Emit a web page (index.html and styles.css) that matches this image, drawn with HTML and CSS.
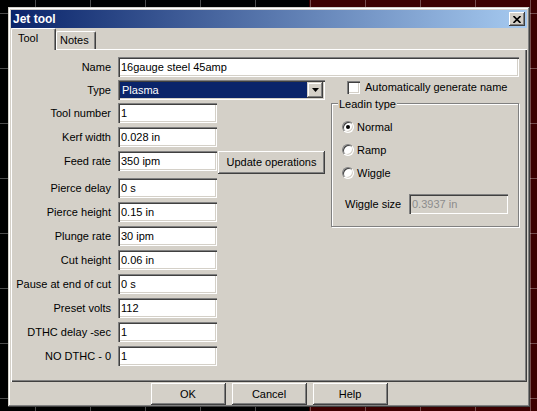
FILE: index.html
```html
<!DOCTYPE html>
<html>
<head>
<meta charset="utf-8">
<link rel="stylesheet" href="styles.css">
</head>
<body>
<div class="dialog">
  <div class="titlebar">
    <span class="title">Jet tool</span>
    <span class="close"><svg width="8" height="7" viewBox="0 0 8 7"><path d="M0.5 0 L7.5 7 M7.5 0 L0.5 7" stroke="#000" stroke-width="1.6" fill="none"/></svg></span>
  </div>
  <div class="tabs">
    <div class="tab active">Tool</div>
    <div class="tab">Notes</div>
  </div>
  <div class="panel">
    <div class="row"><span class="lbl">Name</span><div class="field wide">16gauge steel 45amp</div></div>
    <div class="row gap3">
      <span class="lbl">Type</span>
      <div class="combo"><span class="combo-text">Plasma</span><span class="combo-btn"><svg width="7" height="4" viewBox="0 0 7 4"><polygon points="0,0 7,0 3.5,4" fill="#000"/></svg></span></div>
      <div class="check"><span class="cb"></span>Automatically generate name</div>
    </div>
    <div class="body">
      <div class="col">
        <div class="row"><span class="lbl">Tool number</span><div class="field">1</div></div>
        <div class="row"><span class="lbl">Kerf width</span><div class="field">0.028 in</div></div>
        <div class="row tall"><span class="lbl">Feed rate</span><div class="field">350 ipm</div><div class="btn update">Update operations</div></div>
        <div class="row"><span class="lbl">Pierce delay</span><div class="field">0 s</div></div>
        <div class="row"><span class="lbl">Pierce height</span><div class="field">0.15 in</div></div>
        <div class="row"><span class="lbl">Plunge rate</span><div class="field">30 ipm</div></div>
        <div class="row"><span class="lbl">Cut height</span><div class="field">0.06 in</div></div>
        <div class="row"><span class="lbl">Pause at end of cut</span><div class="field">0 s</div></div>
        <div class="row"><span class="lbl">Preset volts</span><div class="field">112</div></div>
        <div class="row"><span class="lbl">DTHC delay -sec</span><div class="field">1</div></div>
        <div class="row"><span class="lbl">NO DTHC - 0</span><div class="field">1</div></div>
      </div>
      <div class="group">
        <span class="legend">Leadin type</span>
        <div class="radios">
          <div class="radio"><span class="rb on"></span>Normal</div>
          <div class="radio"><span class="rb"></span>Ramp</div>
          <div class="radio"><span class="rb"></span>Wiggle</div>
        </div>
        <div class="wiggle"><span class="wlbl">Wiggle size</span><div class="field disabled">0.3937 in</div></div>
      </div>
    </div>
  </div>
  <div class="actions">
    <div class="btn act">OK</div>
    <div class="btn act">Cancel</div>
    <div class="btn act">Help</div>
  </div>
</div>
</body>
</html>
```
FILE: styles.css
```css
html {
  background-color: #000;
  background-image:
    repeating-linear-gradient(to right, transparent 0, transparent 35px, rgba(255,255,255,0.3) 35px, rgba(255,255,255,0.3) 36px, transparent 36px, transparent 55px),
    repeating-linear-gradient(to bottom, transparent 0, transparent 13px, rgba(255,255,255,0.3) 13px, rgba(255,255,255,0.3) 14px, transparent 14px, transparent 55px),
    linear-gradient(to right, #000 0, #000 309px, #3c0000 309px, #3c0000 100%);
  height: 100%;
}
body {
  margin: 0;
  padding: 7px 0 0 8px;
  width: 537px;
  height: 411px;
  box-sizing: border-box;
  overflow: hidden;
}
.dialog {
  width: 522px;
  box-sizing: border-box;
  padding: 3px 3px 2px 3px;
  background: #d4d0c8;
  box-shadow: inset -1px -1px #404040, inset 1px 1px #d4d0c8, inset -2px -2px #808080, inset 2px 2px #fff;
  display: flex;
  flex-direction: column;
  font-family: "Liberation Sans", Arial, sans-serif;
  font-size: 11px;
  color: #000;
}
.titlebar {
  height: 18px;
  display: flex;
  align-items: center;
  justify-content: space-between;
  background: linear-gradient(to right, #0a246a, #a6caf0);
  padding: 0 2px;
}
.title {
  color: #fff;
  font-weight: bold;
  font-size: 12px;
}
.close {
  width: 16px;
  height: 14px;
  box-sizing: border-box;
  background: #d4d0c8;
  box-shadow: inset -1px -1px #404040, inset 1px 1px #fff, inset -2px -2px #808080;
  display: flex;
  align-items: center;
  justify-content: center;
}
.tabs {
  display: flex;
  align-items: flex-end;
  height: 21px;
}
.tab {
  height: 18px;
  box-sizing: border-box;
  line-height: 17px;
  background: #d4d0c8;
  border-top: 1px solid #fff;
  border-left: 1px solid #fff;
  border-right: 1px solid #404040;
  box-shadow: inset -1px 0 #808080;
  border-radius: 2px 2px 0 0;
  padding-left: 3px;
  width: 40px;
}
.tab.active {
  position: relative;
  z-index: 1;
  height: 22px;
  margin-bottom: -1px;
  width: 45px;
  padding-left: 6px;
  line-height: 19px;
}
.panel {
  height: 333px;
  box-sizing: border-box;
  padding: 8px 8px 0 0;
  box-shadow: inset 1px 1px #fff, inset -1px -1px #404040, inset -2px -2px #808080;
  display: flex;
  flex-direction: column;
}
.row {
  display: flex;
  align-items: flex-start;
  height: 20px;
}
.row.gap3 {
  margin-top: 3px;
}
.row.tall {
  height: 23px;
}
.lbl {
  width: 100px;
  margin-right: 7px;
  text-align: right;
  line-height: 20px;
  white-space: nowrap;
}
.field {
  width: 99px;
  height: 20px;
  box-sizing: border-box;
  background: #fff;
  box-shadow: inset 1px 1px #808080, inset 2px 2px #404040, inset -1px -1px #fff, inset -2px -2px #d4d0c8;
  padding: 0 3px;
  line-height: 20px;
  white-space: nowrap;
  overflow: hidden;
}
.field.wide {
  flex: 1;
}
.field.disabled {
  background: #d4d0c8;
  color: #8c8c8c;
}
.combo {
  width: 207px;
  height: 20px;
  box-sizing: border-box;
  padding: 2px;
  display: flex;
  background: #fff;
  box-shadow: inset 1px 1px #808080, inset 2px 2px #404040, inset -1px -1px #fff, inset -2px -2px #d4d0c8;
}
.combo-text {
  flex: 1;
  background: #0a246a;
  color: #fff;
  line-height: 16px;
  padding-left: 2px;
}
.combo-btn {
  width: 16px;
  height: 16px;
  box-sizing: border-box;
  background: #d4d0c8;
  box-shadow: inset -1px -1px #404040, inset 1px 1px #d4d0c8, inset -2px -2px #808080, inset 2px 2px #fff;
  display: flex;
  align-items: center;
  justify-content: center;
}
.check {
  display: flex;
  align-items: center;
  margin-left: 22px;
  margin-top: 1px;
  line-height: 13px;
}
.cb {
  width: 13px;
  height: 13px;
  box-sizing: border-box;
  background: #fff;
  box-shadow: inset 1px 1px #808080, inset 2px 2px #404040, inset -1px -1px #fff, inset -2px -2px #d4d0c8;
  margin-right: 5px;
}
.body {
  display: flex;
  margin-top: 3px;
}
.col {
  width: 314px;
  display: flex;
  flex-direction: column;
  gap: 4px;
}
.btn {
  box-sizing: border-box;
  background: #d4d0c8;
  box-shadow: inset -1px -1px #404040, inset 1px 1px #fff, inset -2px -2px #808080, inset 2px 2px #d4d0c8;
  text-align: center;
}
.btn.update {
  width: 107px;
  height: 23px;
  line-height: 23px;
  margin-left: 1px;
}
.group {
  margin-left: 6px;
  width: 192px;
  height: 124px;
  box-sizing: border-box;
  border: 1px solid #808080;
  box-shadow: 1px 1px 0 #fff, inset 1px 1px 0 #fff;
  padding-left: 10px;
  display: flex;
  flex-direction: column;
  align-items: flex-start;
}
.legend {
  margin: -6px 0 0 -4px;
  padding: 0 1px;
  background: #d4d0c8;
  line-height: 13px;
}
.radios {
  margin-top: 4px;
  display: flex;
  flex-direction: column;
}
.radio {
  display: flex;
  align-items: center;
  height: 23px;
}
.rb {
  width: 12px;
  height: 12px;
  box-sizing: border-box;
  border-radius: 50%;
  background: #fff;
  border: 1px solid;
  border-color: #808080 #fff #fff #808080;
  box-shadow: inset 1px 1px #404040, inset -1px -1px #d4d0c8;
  margin-right: 3px;
  display: flex;
  align-items: center;
  justify-content: center;
}
.rb.on::after {
  content: "";
  width: 4px;
  height: 4px;
  border-radius: 50%;
  background: #000;
}
.wiggle {
  display: flex;
  align-items: center;
  margin-top: 10px;
  margin-left: 3px;
}
.wlbl {
  width: 64px;
}
.actions {
  display: flex;
  justify-content: center;
  gap: 6px;
  margin-top: 1px;
}
.btn.act {
  width: 75px;
  height: 22px;
  line-height: 22px;
}
```
